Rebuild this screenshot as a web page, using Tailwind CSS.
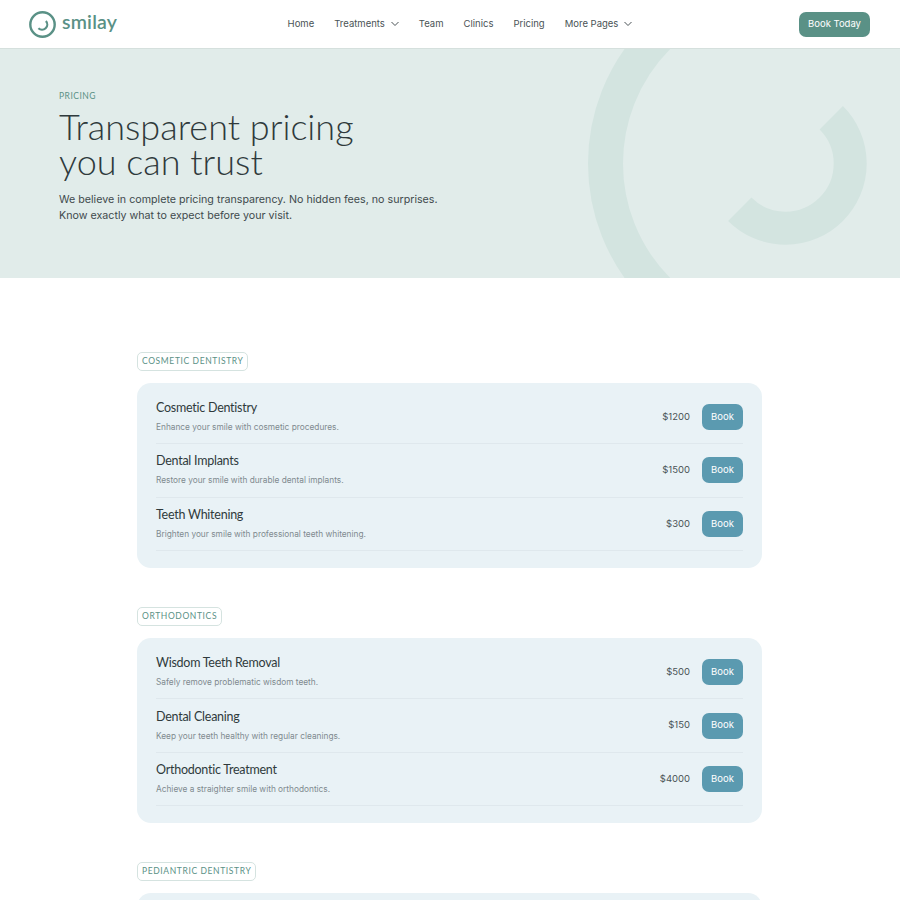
<!DOCTYPE html>
<html lang="en"><head><meta charset="utf-8"><title>Pricing</title>
<script src="https://cdn.jsdelivr.net/npm/@tailwindcss/browser@4"></script></head>
<body class="bg-white font-['Inter',sans-serif]">
<div class="h-[900px] overflow-hidden">
<header class="h-[49px] flex items-center justify-between pl-[29px] pr-[30px] border-b border-[#d5e0dd] bg-white">
  <a class="flex items-center gap-[6px] w-[92px]">
    <svg class="shrink-0" width="27" height="27" viewBox="0 0 27 27" fill="none" stroke="#5a9186"><circle cx="13.5" cy="13.5" r="12.2" stroke-width="2.4"/><path d="M9.4 17.2A5.2 5.2 0 0 0 16.9 10" stroke-width="2.2"/></svg>
    <span class="pb-[4px] font-['Lato',sans-serif] font-semibold text-[19.5px] leading-none tracking-[0.2px] text-[#5a9186]">smilay</span>
  </a>
  <nav class="flex items-center gap-[20px] text-[9.5px] text-[#4a5356]">
    <a>Home</a>
    <a class="flex items-center gap-[6px]">Treatments <svg width="8" height="6" viewBox="0 0 8 6" fill="none" stroke="#4a5356" stroke-width="1"><path d="M.5 1l3.5 3.5L7.5 1"/></svg></a>
    <a>Team</a><a>Clinics</a><a>Pricing</a>
    <a class="flex items-center gap-[6px]">More Pages <svg width="8" height="6" viewBox="0 0 8 6" fill="none" stroke="#4a5356" stroke-width="1"><path d="M.5 1l3.5 3.5L7.5 1"/></svg></a>
  </nav>
  <a class="w-[71px] h-[25px] flex items-center justify-center rounded-[7px] bg-[#5a9186] text-white text-[9.5px]">Book Today</a>
</header>
<section class="relative h-[229px] overflow-hidden bg-[#e1ecea] pl-[59px] pt-[42px]">
  <svg class="absolute left-0 top-0" width="900" height="229" viewBox="0 49 900 229" fill="none" stroke="#d3e4e0"><circle cx="785.5" cy="163.5" r="180" stroke-width="35"/><path d="M739.75 209.25A64.7 64.7 0 0 0 831.25 117.75" stroke-width="33"/></svg>
  <div class="relative">
    <p class="font-['Lato',sans-serif] text-[8.5px] leading-[10px] tracking-[0.5px] uppercase text-[#5a9186]">Pricing</p>
    <h1 class="mt-[8px] font-['Lato',sans-serif] font-light text-[36px] leading-[35px] text-[#2f3a3c]">Transparent pricing<br>you can trust</h1>
    <p class="mt-[13px] text-[10.7px] leading-[16px] text-[#3f4a4d]">We believe in complete pricing transparency. No hidden fees, no surprises.<br>Know exactly what to expect before your visit.</p>
  </div>
</section>
<main class="w-[625px] ml-[137px] pt-[68px] flex flex-col gap-[33px]">
  <section>
    <span class="inline-flex items-center h-[19px] px-[4px] rounded-[5px] border border-[#d5e3e0] font-['Lato',sans-serif] text-[8.5px] tracking-[0.62px] uppercase text-[#5a9186]">Cosmetic Dentistry</span>
    <div class="mt-[12px] rounded-[14px] bg-[#e9f2f6] px-[19px] pt-[8px] pb-[17px]">
      <div class="h-[53.4px] flex items-center justify-between border-b border-[#dfe8ed]">
        <div><h3 class="pt-[1px] font-['Lato',sans-serif] text-[12.5px] tracking-[-0.25px] leading-[20px] text-[#2f3a3c]">Cosmetic Dentistry</h3><p class="text-[8.3px] leading-[19px] text-[#7f8a8f]">Enhance your smile with cosmetic procedures.</p></div>
        <div class="flex items-center gap-[12px]"><span class="text-[9.5px] text-[#4a5356]">$1200</span><a class="w-[41px] h-[26px] flex items-center justify-center rounded-[7px] bg-[#5b9ab0] text-white text-[9.5px]">Book</a></div>
      </div>
      <div class="h-[53.4px] flex items-center justify-between border-b border-[#dfe8ed]">
        <div><h3 class="pt-[1px] font-['Lato',sans-serif] text-[12.5px] tracking-[-0.25px] leading-[20px] text-[#2f3a3c]">Dental Implants</h3><p class="text-[8.3px] leading-[19px] text-[#7f8a8f]">Restore your smile with durable dental implants.</p></div>
        <div class="flex items-center gap-[12px]"><span class="text-[9.5px] text-[#4a5356]">$1500</span><a class="w-[41px] h-[26px] flex items-center justify-center rounded-[7px] bg-[#5b9ab0] text-white text-[9.5px]">Book</a></div>
      </div>
      <div class="h-[53.4px] flex items-center justify-between border-b border-[#dfe8ed]">
        <div><h3 class="pt-[1px] font-['Lato',sans-serif] text-[12.5px] tracking-[-0.25px] leading-[20px] text-[#2f3a3c]">Teeth Whitening</h3><p class="text-[8.3px] leading-[19px] text-[#7f8a8f]">Brighten your smile with professional teeth whitening.</p></div>
        <div class="flex items-center gap-[12px]"><span class="text-[9.5px] text-[#4a5356]">$300</span><a class="w-[41px] h-[26px] flex items-center justify-center rounded-[7px] bg-[#5b9ab0] text-white text-[9.5px]">Book</a></div>
      </div>
    </div>
  </section>
  <section>
    <span class="inline-flex items-center h-[19px] px-[4px] rounded-[5px] border border-[#d5e3e0] font-['Lato',sans-serif] text-[8.5px] tracking-[0.62px] uppercase text-[#5a9186]">Orthodontics</span>
    <div class="mt-[12px] rounded-[14px] bg-[#e9f2f6] px-[19px] pt-[8px] pb-[17px]">
      <div class="h-[53.4px] flex items-center justify-between border-b border-[#dfe8ed]">
        <div><h3 class="pt-[1px] font-['Lato',sans-serif] text-[12.5px] tracking-[-0.25px] leading-[20px] text-[#2f3a3c]">Wisdom Teeth Removal</h3><p class="text-[8.3px] leading-[19px] text-[#7f8a8f]">Safely remove problematic wisdom teeth.</p></div>
        <div class="flex items-center gap-[12px]"><span class="text-[9.5px] text-[#4a5356]">$500</span><a class="w-[41px] h-[26px] flex items-center justify-center rounded-[7px] bg-[#5b9ab0] text-white text-[9.5px]">Book</a></div>
      </div>
      <div class="h-[53.4px] flex items-center justify-between border-b border-[#dfe8ed]">
        <div><h3 class="pt-[1px] font-['Lato',sans-serif] text-[12.5px] tracking-[-0.25px] leading-[20px] text-[#2f3a3c]">Dental Cleaning</h3><p class="text-[8.3px] leading-[19px] text-[#7f8a8f]">Keep your teeth healthy with regular cleanings.</p></div>
        <div class="flex items-center gap-[12px]"><span class="text-[9.5px] text-[#4a5356]">$150</span><a class="w-[41px] h-[26px] flex items-center justify-center rounded-[7px] bg-[#5b9ab0] text-white text-[9.5px]">Book</a></div>
      </div>
      <div class="h-[53.4px] flex items-center justify-between border-b border-[#dfe8ed]">
        <div><h3 class="pt-[1px] font-['Lato',sans-serif] text-[12.5px] tracking-[-0.25px] leading-[20px] text-[#2f3a3c]">Orthodontic Treatment</h3><p class="text-[8.3px] leading-[19px] text-[#7f8a8f]">Achieve a straighter smile with orthodontics.</p></div>
        <div class="flex items-center gap-[12px]"><span class="text-[9.5px] text-[#4a5356]">$4000</span><a class="w-[41px] h-[26px] flex items-center justify-center rounded-[7px] bg-[#5b9ab0] text-white text-[9.5px]">Book</a></div>
      </div>
    </div>
  </section>
  <section>
    <span class="inline-flex items-center h-[19px] px-[4px] rounded-[5px] border border-[#d5e3e0] font-['Lato',sans-serif] text-[8.5px] tracking-[0.62px] uppercase text-[#5a9186]">Pediantric Dentistry</span>
    <div class="mt-[12px] h-[185px] rounded-[14px] bg-[#e9f2f6]"></div>
  </section>
</main>
</div>
</body></html>
